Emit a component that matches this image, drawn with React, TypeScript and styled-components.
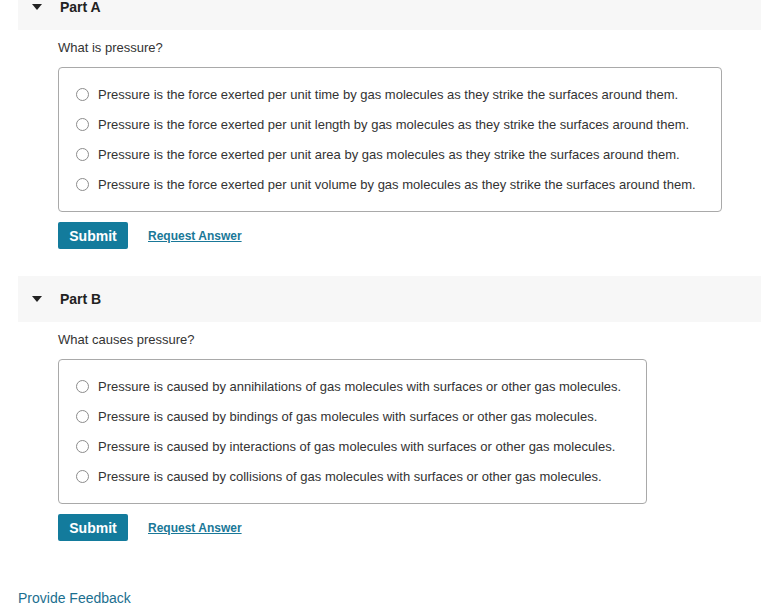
import styled, { createGlobalStyle } from "styled-components"

const GlobalStyle = createGlobalStyle`
  body {
    margin: 0;
    background: #ffffff;
    font-family: "Liberation Sans", Arial, Helvetica, sans-serif;
    color: #333333;
  }
`

const Page = styled.div`
  margin-top: -16px;
  padding-left: 18px;
`

const Section = styled.section`
  margin-bottom: 27px;
`

const PartHeader = styled.div`
  display: flex;
  align-items: center;
  height: 46px;
  background: #f7f7f7;
  padding-left: 14px;
`

const Caret = styled.span`
  width: 0;
  height: 0;
  border-left: 5px solid transparent;
  border-right: 5px solid transparent;
  border-top: 6px solid #222222;
  margin-right: 18px;
`

const PartTitle = styled.h2`
  margin: 0;
  font-size: 14px;
  font-weight: 700;
  color: #222222;
`

const Body = styled.div`
  padding-left: 40px;
`

const Question = styled.p`
  margin: 0;
  padding: 10px 0 11px;
  font-size: 13px;
  line-height: 16px;
  color: #333333;
`

const OptionBox = styled.div`
  display: inline-flex;
  flex-direction: column;
  border: 1px solid #a9a9a9;
  border-radius: 4px;
  padding: 11px 25px 12px 17px;
`

const Option = styled.label`
  display: flex;
  align-items: center;
  height: 30px;
  font-size: 13px;
  color: #333333;
  cursor: pointer;
`

const Radio = styled.span`
  width: 11px;
  height: 11px;
  border-radius: 50%;
  border: 1px solid #8c8c8c;
  background: #ffffff;
  margin-right: 9px;
  flex: none;
`

const Actions = styled.div`
  display: flex;
  align-items: center;
  margin-top: 10px;
  gap: 20px;
`

const SubmitButton = styled.button`
  width: 70px;
  height: 27px;
  border: none;
  border-radius: 2px;
  background: #137b9c;
  color: #ffffff;
  font-family: inherit;
  font-size: 14px;
  font-weight: 700;
  cursor: pointer;
`

const RequestLink = styled.a`
  font-size: 12px;
  font-weight: 700;
  color: #1a7898;
  text-decoration: underline;
  cursor: pointer;
`

const Feedback = styled.a`
  display: block;
  margin-top: 49px;
  font-size: 14px;
  color: #1b6f8f;
  text-decoration: none;
  cursor: pointer;
`

const parts = [
  {
    title: "Part A",
    question: "What is pressure?",
    options: [
      "Pressure is the force exerted per unit time by gas molecules as they strike the surfaces around them.",
      "Pressure is the force exerted per unit length by gas molecules as they strike the surfaces around them.",
      "Pressure is the force exerted per unit area by gas molecules as they strike the surfaces around them.",
      "Pressure is the force exerted per unit volume by gas molecules as they strike the surfaces around them.",
    ],
  },
  {
    title: "Part B",
    question: "What causes pressure?",
    options: [
      "Pressure is caused by annihilations of gas molecules with surfaces or other gas molecules.",
      "Pressure is caused by bindings of gas molecules with surfaces or other gas molecules.",
      "Pressure is caused by interactions of gas molecules with surfaces or other gas molecules.",
      "Pressure is caused by collisions of gas molecules with surfaces or other gas molecules.",
    ],
  },
]

const App = () => {
  return (
    <>
      <GlobalStyle />
      <Page>
        {parts.map((part) => (
          <Section key={part.title}>
            <PartHeader>
              <Caret />
              <PartTitle>{part.title}</PartTitle>
            </PartHeader>
            <Body>
              <Question>{part.question}</Question>
              <OptionBox>
                {part.options.map((opt) => (
                  <Option key={opt}>
                    <Radio />
                    {opt}
                  </Option>
                ))}
              </OptionBox>
              <Actions>
                <SubmitButton>Submit</SubmitButton>
                <RequestLink>Request Answer</RequestLink>
              </Actions>
            </Body>
          </Section>
        ))}
        <Feedback>Provide Feedback</Feedback>
      </Page>
    </>
  )
}

export default App
